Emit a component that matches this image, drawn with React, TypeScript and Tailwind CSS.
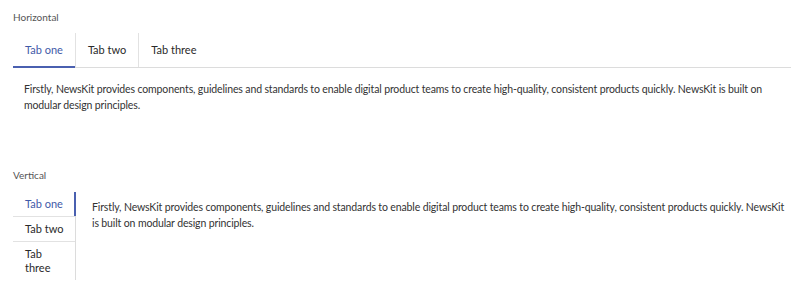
import React, { useState } from 'react'

const copy =
  'Firstly, NewsKit provides components, guidelines and standards to enable digital product teams to create high-quality, consistent products quickly. NewsKit is built on modular design principles.'

const tabs = ['Tab one', 'Tab two', 'Tab three']

function HorizontalTabs() {
  const [active, setActive] = useState(0)
  return (
    <div>
      <div className="flex border-b border-[#dcdcdc]">
        {tabs.map((t, i) => (
          <button
            key={t}
            onClick={() => setActive(i)}
            className={
              'relative h-[34px] px-3 text-[11px] ' +
              (i > 0 ? 'border-l border-[#e2e2e2] ' : '') +
              (i === active ? 'text-[#3f5aa8]' : 'text-[#2a2a2a]')
            }
          >
            {t}
            {i === active && (
              <span className="absolute left-0 right-0 -bottom-px h-[2px] bg-[#4a60b0]" />
            )}
          </button>
        ))}
      </div>
      <p className="pl-[11px] pr-3 pt-[13px] text-[10.5px] leading-[16px] tracking-[-0.13px] text-[#333]">
        {copy}
      </p>
    </div>
  )
}

function VerticalTabs() {
  const [active, setActive] = useState(0)
  return (
    <div className="flex">
      <div className="flex w-[63px] flex-col border-r border-[#dcdcdc]">
        {tabs.map((t, i) => (
          <button
            key={t}
            onClick={() => setActive(i)}
            className={
              'relative py-[5px] pl-3 pr-2 text-left text-[11px] leading-[14px] ' +
              (i > 0 ? 'border-t border-[#e2e2e2] ' : '') +
              (i === active ? 'text-[#3f5aa8]' : 'text-[#2a2a2a]')
            }
          >
            {t}
            {i === active && (
              <span className="absolute top-0 bottom-0 -right-px w-[2px] bg-[#4a60b0]" />
            )}
          </button>
        ))}
      </div>
      <p className="flex-1 pl-4 pt-[7px] text-[10.5px] leading-[16px] tracking-[-0.13px] text-[#333]">
        {copy}
      </p>
    </div>
  )
}

export default function App() {
  return (
    <div className="h-[287px] w-[800px] bg-white pl-[13px] pr-[9px] pt-[10px] font-['Lato',sans-serif] text-[#333]">
      <div className="text-[10px] leading-[14px] text-[#555]">Horizontal</div>
      <div className="mt-[9px]">
        <HorizontalTabs />
      </div>
      <div className="mt-[55px] text-[10px] leading-[14px] text-[#555]">Vertical</div>
      <div className="mt-[10px]">
        <VerticalTabs />
      </div>
    </div>
  )
}
